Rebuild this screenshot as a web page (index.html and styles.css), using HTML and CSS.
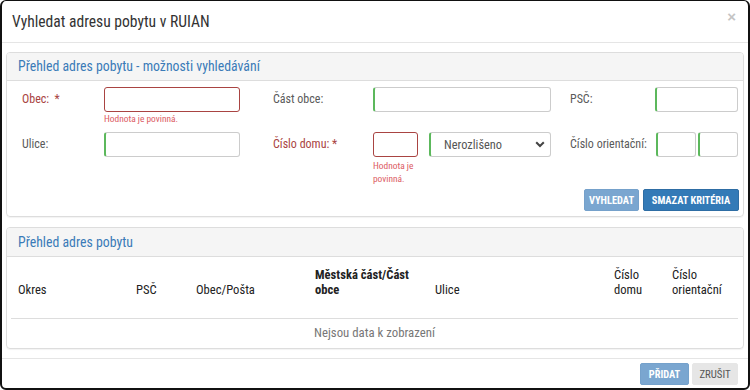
FILE: index.html
```html
<!DOCTYPE html>
<html>
<head>
    <title>Vyhledat adresu pobytu v RUIAN</title>
    <link rel="stylesheet" href="styles.css">
</head>
<body>
    <div class="modal">
        <div class="modal-header">
            <h4 class="modal-title">Vyhledat adresu pobytu v RUIAN</h4>
            <span class="close">&times;</span>
        </div>
        <div class="modal-body">
            <div class="panel">
                <div class="panel-heading">Přehled adres pobytu - možnosti vyhledávání</div>
                <div class="panel-body search-body">
                    <div class="form-row row-first">
                        <label class="lbl required">Obec:&nbsp; *</label>
                        <div class="cell">
                            <input type="text" class="field field-error w-obec">
                            <div class="help">Hodnota je povinná.</div>
                        </div>
                        <label class="lbl">Část obce:</label>
                        <div class="cell">
                            <input type="text" class="field field-ok w-cast">
                        </div>
                        <label class="lbl">PSČ:</label>
                        <div class="cell">
                            <input type="text" class="field field-ok w-psc">
                        </div>
                    </div>
                    <div class="form-row row-second">
                        <label class="lbl">Ulice:</label>
                        <div class="cell">
                            <input type="text" class="field field-ok w-obec">
                        </div>
                        <label class="lbl required">Číslo domu: *</label>
                        <div class="cell split">
                            <div class="cell-domu">
                                <input type="text" class="field field-error w-domu">
                                <div class="help">Hodnota je povinná.</div>
                            </div>
                            <div class="select field field-ok">
                                <span>Nerozlišeno</span>
                                <svg width="10" height="7" viewBox="0 0 10 7"><path d="M1.2 1.2 L5 5 L8.8 1.2" fill="none" stroke="#444" stroke-width="2"/></svg>
                            </div>
                        </div>
                        <label class="lbl">Číslo orientační:</label>
                        <div class="cell pair">
                            <input type="text" class="field field-ok w-or">
                            <input type="text" class="field field-ok w-or">
                        </div>
                    </div>
                    <div class="actions">
                        <button class="btn btn-primary disabled btn-search">Vyhledat</button>
                        <button class="btn btn-primary btn-clear">Smazat kritéria</button>
                    </div>
                </div>
            </div>

            <div class="panel panel-list">
                <div class="panel-heading">Přehled adres pobytu</div>
                <div class="panel-body list-body">
                    <table class="grid">
                        <thead>
                            <tr>
                                <th class="c-okres">Okres</th>
                                <th class="c-psc">PSČ</th>
                                <th class="c-obec">Obec/Pošta</th>
                                <th class="c-cast">Městská část/Část obce</th>
                                <th class="c-ulice">Ulice</th>
                                <th class="c-domu">Číslo domu</th>
                                <th class="c-or">Číslo orientační</th>
                            </tr>
                        </thead>
                        <tbody>
                            <tr>
                                <td colspan="7" class="empty">Nejsou data k zobrazení</td>
                            </tr>
                        </tbody>
                    </table>
                </div>
            </div>
        </div>
        <div class="modal-footer">
            <button class="btn btn-primary disabled btn-add">Přidat</button>
            <button class="btn btn-default btn-cancel">Zrušit</button>
        </div>
    </div>
</body>
</html>
```

FILE: styles.css
```css
* {
    box-sizing: border-box;
}
body {
    margin: 0;
    background: #fff;
    font-family: "Roboto Condensed", Roboto, "Liberation Sans", sans-serif;
    font-stretch: condensed;
    font-size: 12px;
    color: #333;
}
.modal {
    width: 750px;
    height: 390px;
    background: #fff;
    border: 2px solid #111;
    border-top-width: 1px;
    border-radius: 6px;
    display: flex;
    flex-direction: column;
    overflow: hidden;
}
.modal-header {
    height: 42px;
    flex-shrink: 0;
    border-bottom: 1px solid #e5e5e5;
    padding: 0 12px 0 10px;
    display: flex;
    align-items: center;
    justify-content: space-between;
}
.modal-title {
    margin: 0;
    font-size: 15.6px;
    font-weight: normal;
    color: #333;
}
.close {
    align-self: flex-start;
    margin-top: 7px;
    font-family: "Liberation Sans", sans-serif;
    font-size: 15px;
    font-weight: bold;
    color: #c4c4c4;
}
.modal-body {
    padding: 9px 4px 9px 4px;
    border-bottom: 1px solid #e5e5e5;
}
.panel {
    border: 1px solid #ddd;
    border-radius: 4px;
    box-shadow: 0 1px 1px rgba(0, 0, 0, 0.05);
}
.panel-list {
    margin-top: 10px;
}
.panel-heading {
    height: 28px;
    line-height: 27px;
    padding: 0 11px;
    background: #f5f5f5;
    border-bottom: 1px solid #ddd;
    border-radius: 3px 3px 0 0;
    color: #3a7bb8;
    font-size: 13.8px;
}
.panel-list .panel-heading {
    height: 29px;
    line-height: 29px;
}

/* search form */
.search-body {
    padding: 6px 4px 5px 15px;
}
.form-row {
    display: grid;
    grid-template-columns: 82px 169px 100px 197px 85px 83px;
    align-items: start;
}
.row-first {
    height: 45px;
}
.row-second {
    height: 57px;
}
.lbl {
    line-height: 25px;
    color: #5a5a5a;
}
.lbl.required {
    color: #a94442;
}
.field {
    display: block;
    height: 25px;
    border: 1px solid #ccc;
    border-radius: 3px;
    background: #fff;
    margin: 0;
    padding: 0 6px;
    font: inherit;
}
.field-ok {
    border-left: 2px solid #5cb85c;
}
.field-error {
    border-color: #a94442;
}
.w-obec { width: 136px; }
.w-cast { width: 178px; }
.w-psc { width: 83px; }
.w-domu { width: 45px; }
.w-or { width: 40px; }
.help {
    font-size: 9.4px;
    line-height: 13px;
    color: #dc5c64;
}
.cell-domu .help {
    margin-top: 2px;
}
.split {
    display: flex;
    gap: 11px;
}
.cell-domu {
    width: 45px;
}
.select {
    width: 122px;
    display: flex;
    align-items: center;
    justify-content: space-between;
    padding: 0 5px 0 13px;
    color: #555;
    font-size: 12.4px;
}
.pair {
    display: flex;
    gap: 2px;
    padding-left: 1px;
}
.actions {
    display: flex;
    justify-content: flex-end;
    gap: 4px;
}

/* buttons */
.btn {
    height: 22px;
    padding: 0;
    border: 1px solid transparent;
    border-radius: 2px;
    font-family: inherit;
    font-size: 10.4px;
    font-weight: bold;
    text-transform: uppercase;
    cursor: pointer;
}
.btn-primary {
    background: #337ab7;
    border-color: #2e6da4;
    color: #fff;
}
.btn-primary.disabled {
    background: #7aa6d0;
    border-color: #75a1cb;
}
.btn-default {
    background: #e6e6e6;
    border-color: #e6e6e6;
    color: #555;
    font-weight: normal;
    font-size: 10.8px;
}
.btn-search { width: 55px; }
.btn-clear { width: 96px; }
.btn-add { width: 49px; }
.btn-cancel { width: 46px; }

/* list */
.list-body {
    padding: 0 4px 2px 4px;
}
.grid {
    width: 727px;
    border-collapse: collapse;
    table-layout: fixed;
}
.grid th {
    text-align: left;
    vertical-align: bottom;
    padding: 10px 7px 21px;
    line-height: 15px;
    font-weight: normal;
    font-size: 12.6px;
    color: #222;
    border-bottom: 1px solid #ddd;
}
.grid th.c-cast {
    font-weight: bold;
}
.c-okres { width: 118px; }
.c-psc { width: 60px; }
.c-obec { width: 119px; }
.c-cast { width: 120px; }
.c-ulice { width: 179px; }
.c-domu { width: 58px; }
.c-or { width: 73px; }
.grid td.empty {
    text-align: center;
    padding: 6px 7px;
    line-height: 15px;
    color: #777;
    font-size: 12.8px;
}

.modal-footer {
    display: flex;
    justify-content: flex-end;
    gap: 3px;
    padding: 4px 10px 0 0;
}
```
